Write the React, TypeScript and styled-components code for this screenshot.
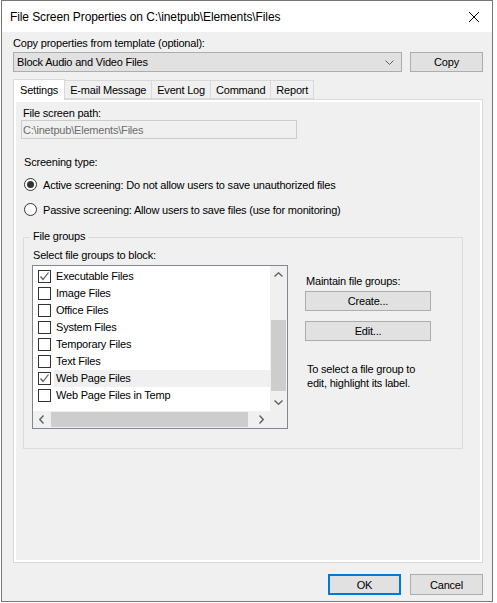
import * as React from 'react';
import styled, { createGlobalStyle } from 'styled-components';

const GlobalStyle = createGlobalStyle`
  html, body {
    margin: 0;
    padding: 0;
    background: #ffffff;
  }
  body {
    font-family: "Liberation Sans", Arial, sans-serif;
    font-size: 11px;
    letter-spacing: -0.2px;
    color: #000;
  }
`;

const fileGroups = [
  { label: 'Executable Files', checked: true },
  { label: 'Image Files', checked: false },
  { label: 'Office Files', checked: false },
  { label: 'System Files', checked: false },
  { label: 'Temporary Files', checked: false },
  { label: 'Text Files', checked: false },
  { label: 'Web Page Files', checked: true, selected: true },
  { label: 'Web Page Files in Temp', checked: false },
];

const tabs = ['Settings', 'E-mail Message', 'Event Log', 'Command', 'Report'];

export default function App() {
  return (
    <>
      <GlobalStyle />
      <Page>
        <Window>
          <TitleBar>
            <Title>File Screen Properties on C:\inetpub\Elements\Files</Title>
            <CloseIcon width="12" height="12" viewBox="0 0 12 12">
              <path d="M1 1 L11 11 M11 1 L1 11" stroke="#000" strokeWidth="1" fill="none" />
            </CloseIcon>
          </TitleBar>
          <Client>
            <Label>Copy properties from template (optional):</Label>
            <TemplateRow>
              <Combo>
                <span>Block Audio and Video Files</span>
                <svg width="9" height="5" viewBox="0 0 9 5">
                  <path d="M0.5 0.5 L4.5 4.5 L8.5 0.5" stroke="#606060" fill="none" />
                </svg>
              </Combo>
              <Button $width={73}>Copy</Button>
            </TemplateRow>
            <TabStrip>
              {tabs.map((t, i) => (
                <Tab key={t} $active={i === 0}>
                  {t}
                </Tab>
              ))}
            </TabStrip>
            <Panel>
              <Label $indent={9}>File screen path:</Label>
              <PathBox>C:\inetpub\Elements\Files</PathBox>
              <Label $indent={10} $top={17}>Screening type:</Label>
              <RadioRow $top={9}>
                <Radio $checked />
                <span>Active screening: Do not allow users to save unauthorized files</span>
              </RadioRow>
              <RadioRow $top={12}>
                <Radio />
                <span>Passive screening: Allow users to save files (use for monitoring)</span>
              </RadioRow>
              <GroupBox>
                <GroupTitle>File groups</GroupTitle>
                <Label $indent={9}>Select file groups to block:</Label>
                <GroupBody>
                  <ListBox>
                    <ListItems>
                      {fileGroups.map((g) => (
                        <ListRow key={g.label}>
                          <CheckBox>
                            {g.checked && (
                              <svg width="11" height="11" viewBox="0 0 11 11">
                                <path d="M1.5 5.5 L4 8.5 L9.5 1.5" stroke="#5a5a5a" strokeWidth="1.2" fill="none" />
                              </svg>
                            )}
                          </CheckBox>
                          <ItemLabel $selected={g.selected}>{g.label}</ItemLabel>
                        </ListRow>
                      ))}
                    </ListItems>
                    <VScroll>
                      <Arrow>
                        <svg width="9" height="5" viewBox="0 0 9 5">
                          <path d="M0.5 4.5 L4.5 0.8 L8.5 4.5" stroke="#606060" strokeWidth="1.4" fill="none" />
                        </svg>
                      </Arrow>
                      <VTrack>
                        <VThumb />
                      </VTrack>
                      <Arrow>
                        <svg width="9" height="5" viewBox="0 0 9 5">
                          <path d="M0.5 0.5 L4.5 4.2 L8.5 0.5" stroke="#606060" strokeWidth="1.4" fill="none" />
                        </svg>
                      </Arrow>
                    </VScroll>
                    <HScroll>
                      <Arrow>
                        <svg width="5" height="9" viewBox="0 0 5 9">
                          <path d="M4.5 0.5 L0.8 4.5 L4.5 8.5" stroke="#606060" strokeWidth="1.4" fill="none" />
                        </svg>
                      </Arrow>
                      <HTrack>
                        <HThumb />
                      </HTrack>
                      <Arrow>
                        <svg width="5" height="9" viewBox="0 0 5 9">
                          <path d="M0.5 0.5 L4.2 4.5 L0.5 8.5" stroke="#606060" strokeWidth="1.4" fill="none" />
                        </svg>
                      </Arrow>
                    </HScroll>
                    <Corner />
                  </ListBox>
                  <SideColumn>
                    <SideLabel>Maintain file groups:</SideLabel>
                    <Button $width={126}>Create...</Button>
                    <Button $width={126} $top={10}>Edit...</Button>
                    <HelpText>
                      To select a file group to
                      <br />
                      edit, highlight its label.
                    </HelpText>
                  </SideColumn>
                </GroupBody>
              </GroupBox>
            </Panel>
            <Footer>
              <Button $width={73} $height={21} $default>OK</Button>
              <Button $width={73} $height={21}>Cancel</Button>
            </Footer>
          </Client>
        </Window>
      </Page>
    </>
  );
}

const Page = styled.div`
  padding: 0 0 0 1px;
  width: 497px;
  height: 603px;
  box-sizing: border-box;
`;

const Window = styled.div`
  width: 492px;
  height: 602px;
  box-sizing: border-box;
  border: 1px solid #777777;
  display: flex;
  flex-direction: column;
  background: #f0f0f0;
`;

const TitleBar = styled.div`
  height: 31px;
  flex: none;
  background: #ffffff;
  display: flex;
  align-items: center;
  justify-content: space-between;
  padding: 0 8px 0 8px;
`;

const Title = styled.div`
  font-family: "Liberation Sans", Arial, sans-serif;
  font-size: 12px;
  letter-spacing: -0.1px;
  color: #000;
`;

const CloseIcon = styled.svg`
  margin-right: 4px;
`;

const Client = styled.div`
  flex: 1;
  display: flex;
  flex-direction: column;
  padding: 5px 9px 0 11px;
`;

const Label = styled.div<{ $indent?: number; $top?: number }>`
  height: 13px;
  line-height: 13px;
  white-space: nowrap;
  padding-left: ${({ $indent }) => $indent ?? 0}px;
  margin-top: ${({ $top }) => $top ?? 0}px;
`;

const TemplateRow = styled.div`
  display: flex;
  gap: 8px;
  margin-top: 2px;
`;

const Combo = styled.div`
  width: 390px;
  height: 20px;
  box-sizing: border-box;
  background: #e1e1e1;
  border: 1px solid #adadad;
  display: flex;
  align-items: center;
  justify-content: space-between;
  padding: 0 7px 0 3px;
`;

const Button = styled.div<{ $width: number; $height?: number; $top?: number; $default?: boolean }>`
  width: ${({ $width }) => $width}px;
  height: ${({ $height }) => $height ?? 20}px;
  margin-top: ${({ $top }) => $top ?? 0}px;
  box-sizing: border-box;
  background: #e1e1e1;
  border: ${({ $default }) => ($default ? '2px solid #0078d7' : '1px solid #adadad')};
  display: flex;
  align-items: center;
  justify-content: center;
  font-size: 11px;
  flex: none;
`;

const TabStrip = styled.div`
  display: flex;
  align-items: flex-end;
  height: 21px;
  margin-top: 6px;
  position: relative;
  z-index: 1;
`;

const Tab = styled.div<{ $active?: boolean }>`
  height: ${({ $active }) => ($active ? 21 : 19)}px;
  box-sizing: border-box;
  padding: 0 ${({ $active }) => ($active ? 6 : 5)}px;
  display: flex;
  align-items: center;
  background: ${({ $active }) => ($active ? '#ffffff' : '#f0f0f0')};
  border: 1px solid #d9d9d9;
  border-bottom: ${({ $active }) => ($active ? 'none' : '1px solid #d9d9d9')};
  margin-left: ${({ $active }) => ($active ? 0 : -1)}px;
  margin-bottom: ${({ $active }) => ($active ? -1 : 0)}px;
  white-space: nowrap;
`;

const Panel = styled.div`
  width: 470px;
  height: 464px;
  box-sizing: border-box;
  border: 1px solid #d9d9d9;
  box-shadow: inset 0 0 0 2px #ffffff;
  background: #f0f0f0;
  padding: 7px 0 0 0;
  display: flex;
  flex-direction: column;
`;

const PathBox = styled.div`
  margin: 0 0 0 7px;
  width: 276px;
  height: 19px;
  box-sizing: border-box;
  border: 1px solid #cccccc;
  background: #f0f0f0;
  color: #6d6d6d;
  display: flex;
  align-items: center;
  padding-left: 1px;
`;

const RadioRow = styled.div<{ $top: number }>`
  display: flex;
  align-items: center;
  gap: 6px;
  margin: ${({ $top }) => $top}px 0 0 10px;
  height: 13px;
  white-space: nowrap;
`;

const Radio = styled.div<{ $checked?: boolean }>`
  width: 13px;
  height: 13px;
  box-sizing: border-box;
  border-radius: 50%;
  border: 1px solid #333333;
  background: #ffffff;
  display: flex;
  align-items: center;
  justify-content: center;
  flex: none;
  &::after {
    content: '';
    display: ${({ $checked }) => ($checked ? 'block' : 'none')};
    width: 7px;
    height: 7px;
    border-radius: 50%;
    background: #333333;
  }
`;

const GroupBox = styled.div`
  margin: 21px 0 0 9px;
  width: 440px;
  height: 212px;
  box-sizing: border-box;
  border: 1px solid #dcdcdc;
  position: relative;
  padding: 11px 0 0 0;
`;

const GroupTitle = styled.div`
  position: absolute;
  top: -8px;
  left: 6px;
  padding: 0 3px 0 3px;
  background: #f0f0f0;
  line-height: 13px;
`;

const GroupBody = styled.div`
  display: flex;
  margin: 3px 0 0 8px;
  gap: 17px;
`;

const ListBox = styled.div`
  width: 256px;
  height: 164px;
  box-sizing: border-box;
  border: 1px solid #828790;
  background: #ffffff;
  display: grid;
  grid-template-columns: 1fr 17px;
  grid-template-rows: 1fr 17px;
  flex: none;
`;

const ListItems = styled.div`
  padding: 2px 0 0 0;
  overflow: hidden;
`;

const ListRow = styled.div`
  display: flex;
  align-items: center;
  height: 17px;
  padding-left: 5px;
`;

const CheckBox = styled.div`
  width: 13px;
  height: 13px;
  box-sizing: border-box;
  border: 1px solid #333333;
  background: #ffffff;
  display: flex;
  align-items: center;
  justify-content: center;
  flex: none;
  margin-right: 3px;
`;

const ItemLabel = styled.div<{ $selected?: boolean }>`
  flex: 1;
  height: 17px;
  line-height: 17px;
  padding-left: 2px;
  background: ${({ $selected }) => ($selected ? '#f0f0f0' : 'transparent')};
  white-space: nowrap;
`;

const VScroll = styled.div`
  background: #f0f0f0;
  display: flex;
  flex-direction: column;
`;

const HScroll = styled.div`
  background: #f0f0f0;
  display: flex;
`;

const Arrow = styled.div`
  width: 17px;
  height: 17px;
  flex: none;
  display: flex;
  align-items: center;
  justify-content: center;
`;

const VTrack = styled.div`
  flex: 1;
  padding: 37px 1px 3px 1px;
  display: flex;
`;

const VThumb = styled.div`
  flex: 1;
  background: #cdcdcd;
`;

const HTrack = styled.div`
  flex: 1;
  padding: 1px 0 1px 1px;
  display: flex;
`;

const HThumb = styled.div`
  width: 197px;
  background: #cdcdcd;
`;

const Corner = styled.div`
  background: #f0f0f0;
`;

const SideColumn = styled.div`
  display: flex;
  flex-direction: column;
  padding-top: 10px;
`;

const SideLabel = styled.div`
  line-height: 13px;
  padding-left: 1px;
  margin-bottom: 3px;
`;

const HelpText = styled.div`
  margin-top: 21px;
  padding-left: 2px;
  line-height: 14px;
`;

const Footer = styled.div`
  display: flex;
  justify-content: flex-end;
  gap: 9px;
  margin-top: 11px;
`;
